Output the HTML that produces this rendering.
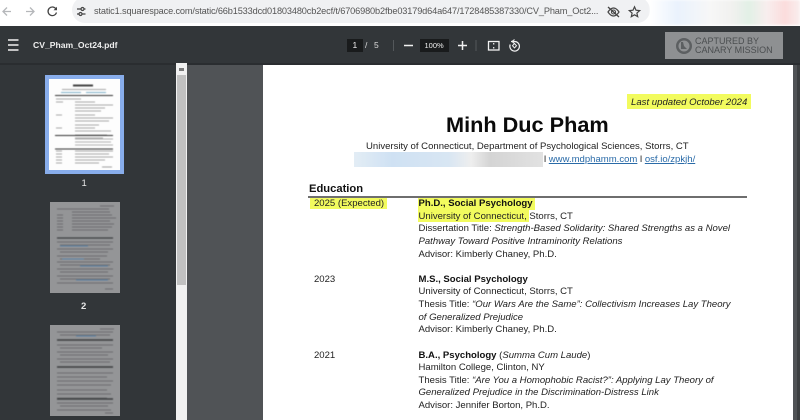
<!DOCTYPE html>
<html><head><meta charset="utf-8">
<style>
html,body{margin:0;padding:0;background:#fff}
body{width:800px;height:420px;overflow:hidden;position:relative;font-family:"Liberation Sans",sans-serif}
.a{position:absolute}
.t{position:absolute;white-space:nowrap;line-height:13px;font-size:9.550px;color:#222}
.h{position:absolute;background:#f2fb5e}
b{color:#111}
a{color:#2a6ba8;text-decoration:underline}
</style></head><body>
<!-- browser bar -->
<div class="a" style="left:0;top:0;width:800px;height:27px;background:#fff"></div>
<div class="a" style="left:72px;top:-3px;width:578px;height:26px;border-radius:13px;background:#f0f1f3"></div>
<div class="a" style="left:650px;top:0;width:150px;height:25px;background:linear-gradient(90deg,#fff 0,#eaf2fd 18%,#f7f7f7 40%,#f1f1ef 55%,#e2f0e6 66%,#f8eeee 78%,#fbdcdc 90%,#f9eeee 100%);filter:blur(1px)"></div>
<svg class="a" style="left:0;top:0" width="800" height="27" fill="none">
<path d="M11 11.500H3.500M7 7.500l-4 4 4 4" stroke="#b5b7ba" stroke-width="1.300"/>
<path d="M26 11.500h8M30 7.500l4 4-4 4" stroke="#b5b7ba" stroke-width="1.300"/>
<path d="M56 9a4.300 4.300 0 1 0 .5 3.500" stroke="#444" stroke-width="1.300"/><path d="M57 6.800v3.500h-3.500z" fill="#444"/>
<g stroke="#444" stroke-width="1.200"><path d="M77 9h4M84 9h1.500M77 14h2M82 14h3.500"/><circle cx="82.500" cy="9" r="1.500"/><circle cx="80.500" cy="14" r="1.500"/></g>
<path d="M608 12c2-3 4-4 5.500-4s3.500 1 5.500 4c-2 3-4 4-5.500 4s-3.500-1-5.500-4z" stroke="#444" stroke-width="1.200"/><circle cx="613.500" cy="12" r="2" stroke="#444" stroke-width="1.100"/><path d="M608 7l11 10" stroke="#444" stroke-width="1.300"/>
<path d="M634.500 6.800l1.500 3.400 3.700.4-2.800 2.500.8 3.600-3.200-1.900-3.200 1.900.8-3.600-2.800-2.500 3.700-.4z" stroke="#444" stroke-width="1.200"/>
</svg>
<div class="t" style="left:94px;top:5px;font-size:9.200px;letter-spacing:-.14px;color:#555;width:506px;overflow:hidden">static1.squarespace.com/static/66b1533dcd01803480cb2ecf/t/6706980b2fbe03179d64a647/1728485387330/CV_Pham_Oct2...</div>
<!-- pdf toolbar -->
<div class="a" style="left:0;top:26px;width:800px;height:37px;background:#323639"></div>
<div class="a" style="left:0;top:63px;width:800px;height:2px;background:#2a2d30"></div>
<svg class="a" style="left:0;top:26px" width="800" height="38" fill="none">
<path d="M8 14h10.500M8 19h10.500M8 24h10.500" stroke="#f1f1f1" stroke-width="1.500"/>
<path d="M393.500 14v11M476 14v11" stroke="#54585b" stroke-width="1"/>
<path d="M404 19.500h9M458 19.500h9M462.500 15v9" stroke="#f1f1f1" stroke-width="1.500"/>
<rect x="488.500" y="15.500" width="10.500" height="8.500" stroke="#f1f1f1" stroke-width="1.300"/><path d="M493.700 17v1.500M493.700 21v1.500" stroke="#f1f1f1" stroke-width="1.200"/>
<path d="M511 15.500h3.500a4.800 4.800 0 1 1-4.300 3" stroke="#f1f1f1" stroke-width="1.200"/><path d="M514.500 13.500l-2.500 2 2.500 2" stroke="#f1f1f1" stroke-width="1.100"/><path d="M514.500 17.500l2 2.200-2 2.200-2-2.200z" stroke="#f1f1f1" stroke-width="1"/>
</svg>
<div class="t" style="left:33px;top:39px;color:#eee;font-size:8.600px;font-weight:bold;filter:blur(.2px)">CV_Pham_Oct24.pdf</div>
<div class="a" style="left:347px;top:39px;width:16px;height:13px;background:#191b1c"></div>
<div class="t" style="left:352.500px;top:39px;color:#eee;font-size:8.500px">1</div>
<div class="t" style="left:365px;top:39px;color:#ddd;font-size:8.500px">/</div>
<div class="t" style="left:374px;top:39px;color:#ddd;font-size:8.500px">5</div>
<div class="a" style="left:420px;top:39px;width:29px;height:13px;background:#191b1c"></div>
<div class="t" style="left:424.500px;top:39px;color:#eee;font-size:7.500px">100%</div>
<!-- canary -->
<div class="a" style="left:665px;top:32px;width:118px;height:27px;background:#8e9092"></div>
<svg class="a" style="left:675px;top:37px" width="18" height="18"><circle cx="9" cy="9" r="8" fill="#5c5f61"/><circle cx="9" cy="9" r="5.500" fill="#8e9092"/><path d="M6 5h2l1 4 3 3H6z" fill="#5c5f61"/></svg>
<div class="t" style="left:695px;top:36.500px;font-size:9px;line-height:9.500px;color:#4b4e50;filter:blur(.2px)">CAPTURED BY<br>CANARY MISSION</div>
<!-- sidebar -->
<div class="a" style="left:0;top:65px;width:176px;height:355px;background:#323639"></div>
<div class="a" style="left:176px;top:63px;width:11px;height:357px;background:#f1f1f1"></div>
<div class="a" style="left:177px;top:75px;width:9px;height:210px;background:#c1c1c1"></div>
<div class="a" style="left:179px;top:68px;width:5px;height:3px;background:#7a7a7a"></div>
<div class="a" style="left:187px;top:65px;width:76px;height:355px;background:#505356"></div>
<div class="a" style="left:793px;top:65px;width:7px;height:355px;background:#505356"></div>
<div class="a" style="left:797px;top:65px;width:3px;height:355px;background:#3c3f41"></div>
<!-- thumb 1 -->
<div class="a" style="left:45px;top:75px;width:79px;height:99px;background:#88adeb"></div>
<div class="a" style="left:49px;top:79px;width:71px;height:91px;background:#fdfdfd"></div>
<svg class="a" style="left:49px;top:79px;filter:blur(.4px)" width="71" height="91">
<g stroke="#8a8a8a" stroke-width=".8">
<path d="M24 6.500h20" stroke="#444" stroke-width="2"/><path d="M13 10.500h44"/><path d="M7 20h25M26 23h20M26 26h38M26 29h30M26 32h26M26 36h20M26 39h38M26 42h34M26 46h24M26 49h20M26 52h36M26 56h32M26 59h28M7 23h7M7 36h6M7 49h6"/>
<path d="M26 72h38M26 75h34M26 78h38M26 81h30M7 72h6M7 75h6M7 78h6M7 81h6M7 84h6M26 84h24" />
<path d="M53 88h10"/>
</g>
<path d="M12 13.500h20M37 13.500h20" stroke="#7fb0c8" stroke-width="1"/>
<path d="M6 16.500h58M6 56.500h58M6 70h58" stroke="#333" stroke-width=".9"/>
<path d="M26 60h38M26 63h36M26 66h38" stroke="#999" stroke-width=".8"/>
</svg>
<div class="t" style="left:81.500px;top:177px;color:#e6e6e6;font-size:9.500px">1</div>
<!-- thumb 2 -->
<div class="a" style="left:50px;top:202px;width:70px;height:91px;background:#949597"></div>
<svg class="a" style="left:50px;top:202px;filter:blur(.4px)" width="70" height="91">
<g stroke="#606264" stroke-width=".8">
<path d="M50 4h14M7 7h52M22 10h38M7 13h6M22 13h40M7 16h6M22 16h44M7 19h6M22 19h38M7 22h6M22 22h42M7 25h6M22 25h40M7 28h6M22 28h36"/>
<path d="M7 36h56" stroke="#3c3e40" stroke-width="1.200"/>
<path d="M7 40h56M10 43h50M7 47h56M10 50h48M7 54h50M10 57h40M7 60h56M10 63h50M7 67h56M10 70h48M7 74h56M10 77h50M7 81h56M55 87h8"/>
</g>
<path d="M10 44h28M12 57h22M30 64h28M26 78h32" stroke="#5b82a6" stroke-width="1"/>
</svg>
<div class="t" style="left:81px;top:300px;color:#e6e6e6;font-size:9.500px;font-weight:bold">2</div>
<!-- thumb 3 -->
<div class="a" style="left:50px;top:325px;width:70px;height:91px;background:#949597"></div>
<svg class="a" style="left:50px;top:325px;filter:blur(.4px)" width="70" height="91">
<g stroke="#606264" stroke-width=".8">
<path d="M50 4h14M7 7h56M10 10h50M7 20h56M10 23h42M7 27h56M10 30h48M7 34h56M10 37h50M7 48h56M7 52h50M7 56h56M7 60h54M7 65h50M7 69h54M7 73h50M7 78h56M10 81h48M7 85h54M55 88h8"/>
<path d="M7 15h56M7 42h56M7 74h56" stroke="#3c3e40" stroke-width="1.500"/>
</g>
<path d="M26 11h20" stroke="#5b82a6" stroke-width="1"/>
</svg>
<!-- page -->
<div class="a" style="left:263px;top:65px;width:530px;height:355px;background:#fff"></div>
<div class="h" style="left:627px;top:94px;width:124px;height:15px"></div>
<div class="t" style="left:631px;top:95.500px;font-style:italic;font-size:9.600px">Last updated October 2024</div>
<div class="t" style="left:446px;top:111px;font-size:21.700px;line-height:28px;font-weight:bold;color:#0a0a0a;filter:blur(.15px)">Minh Duc Pham</div>
<div class="t" style="left:366px;top:139.500px">University of Connecticut, Department of Psychological Sciences, Storrs, CT</div>
<div class="a" style="left:354px;top:152px;width:189px;height:15px;background:linear-gradient(90deg,#e3edf5 0,#cfe1f3 20%,#d8e6f3 50%,#eeeeee 62%,#d4d4d4 72%,#e2e2e2 100%)"></div>
<div class="t" style="left:544px;top:152.500px">l <a>www.mdphamm.com</a> l <a>osf.io/zpkjh/</a></div>
<div class="t" style="left:309px;top:182.500px;font-weight:bold;font-size:11.200px;color:#111">Education</div>
<div class="a" style="left:308px;top:196px;width:439px;height:1.500px;background:#6e6e6e"></div>
<div class="h" style="left:310px;top:198px;width:77px;height:11px"></div>
<div class="h" style="left:418px;top:198px;width:117px;height:12px"></div>
<div class="h" style="left:418px;top:210px;width:111px;height:12px"></div>
<div class="t" style="left:314px;top:197px">2025 (Expected)</div>
<div class="t" style="left:418.500px;top:197px"><b>Ph.D., Social Psychology</b></div>
<div class="t" style="left:418.500px;top:209.500px">University of Connecticut, Storrs, CT</div>
<div class="t" style="left:418.500px;top:222px">Dissertation Title: <i>Strength-Based Solidarity: Shared Strengths as a Novel</i></div>
<div class="t" style="left:418.500px;top:235px"><i>Pathway Toward Positive Intraminority Relations</i></div>
<div class="t" style="left:418.500px;top:247.500px">Advisor: Kimberly Chaney, Ph.D.</div>
<div class="t" style="left:314px;top:272.500px">2023</div>
<div class="t" style="left:418.500px;top:272.500px"><b>M.S., Social Psychology</b></div>
<div class="t" style="left:418.500px;top:285px">University of Connecticut, Storrs, CT</div>
<div class="t" style="left:418.500px;top:297.500px">Thesis Title: <i>“Our Wars Are the Same”: Collectivism Increases Lay Theory</i></div>
<div class="t" style="left:418.500px;top:310.500px"><i>of Generalized Prejudice</i></div>
<div class="t" style="left:418.500px;top:323px">Advisor: Kimberly Chaney, Ph.D.</div>
<div class="t" style="left:314px;top:348.500px">2021</div>
<div class="t" style="left:418.500px;top:348.500px"><b>B.A., Psychology</b> (<i>Summa Cum Laude</i>)</div>
<div class="t" style="left:418.500px;top:361px">Hamilton College, Clinton, NY</div>
<div class="t" style="left:418.500px;top:373.500px">Thesis Title: <i>“Are You a Homophobic Racist?”: Applying Lay Theory of</i></div>
<div class="t" style="left:418.500px;top:386px"><i>Generalized Prejudice in the Discrimination-Distress Link</i></div>
<div class="t" style="left:418.500px;top:398.500px">Advisor: Jennifer Borton, Ph.D.</div>
</body></html>
